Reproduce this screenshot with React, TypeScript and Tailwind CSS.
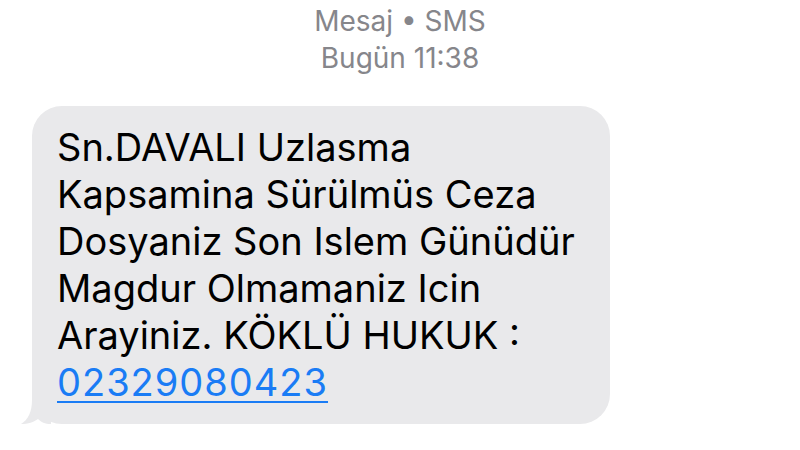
export default function App() {
  const lines = [
    "Sn.DAVALI Uzlasma",
    "Kapsamina Sürülmüs Ceza",
    "Dosyaniz Son Islem Günüdür",
    "Magdur Olmamaniz Icin",
    "Arayiniz. KÖKLÜ HUKUK :",
  ];

  return (
    <div
      className="w-[800px] h-[450px] bg-white overflow-hidden flex flex-col"
      style={{ fontFamily: "Inter, 'Noto Sans', sans-serif" }}
    >
      {/* Header */}
      <div className="flex flex-col items-center pt-[3px] text-[#86868b] text-[28px] leading-[37px]">
        <div>Mesaj • SMS</div>
        <div>Bugün 11:38</div>
      </div>

      {/* Bubble */}
      <div className="pl-[32px] pt-[29px]">
        <div className="relative w-[578px] bg-[#e9e9eb] rounded-[30px] pl-[25px] pt-[18px] pb-[18px]">
          <div className="text-black text-[38px] leading-[47px]">
            {lines.map((l) => (
              <div key={l} className="whitespace-nowrap">
                {l}
              </div>
            ))}
            <div className="whitespace-nowrap">
              <span className="text-[#1a7cf5] tracking-[1px] underline decoration-[2px] underline-offset-[5px]">
                02329080423
              </span>
            </div>
          </div>

          {/* tail */}
          <svg
            className="absolute left-[-11px] bottom-0"
            width="34"
            height="34"
            viewBox="0 0 34 34"
          >
            <path
              d="M11 0 L30 0 L30 34 C24 34 20 32 17 29 C13 32 7 34 0 34 C7 30 11 22 11 10 Z"
              fill="#e9e9eb"
            />
          </svg>
        </div>
      </div>
    </div>
  );
}
